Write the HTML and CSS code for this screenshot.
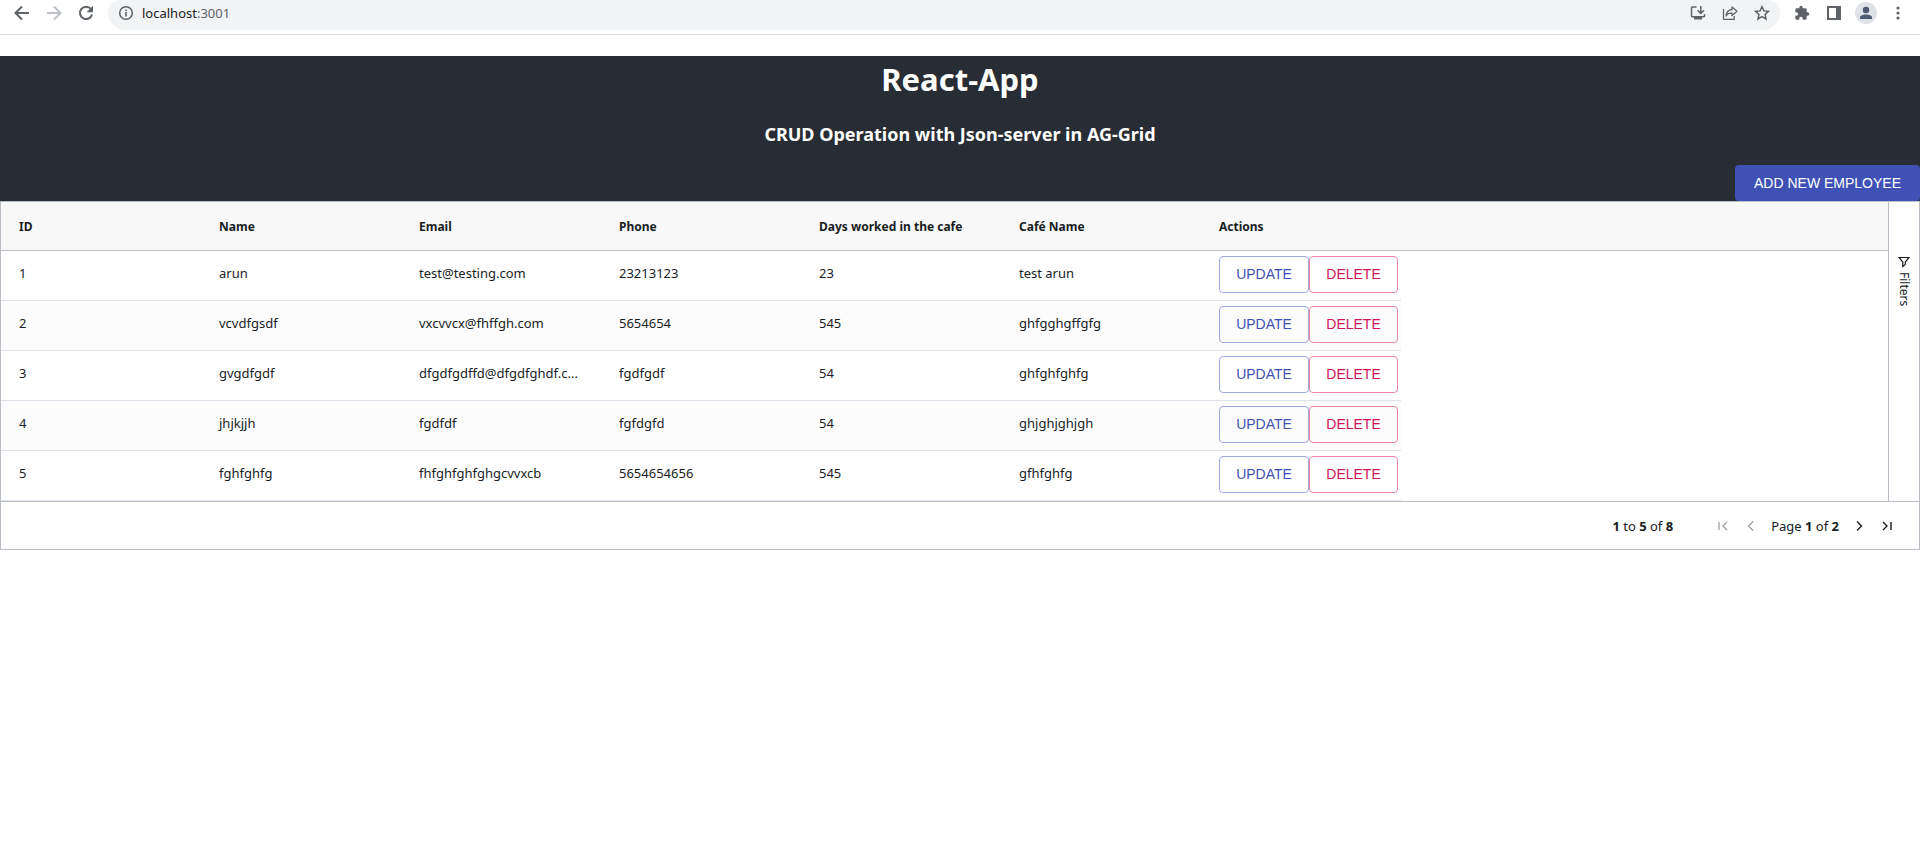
FILE: index.html
```html
<!DOCTYPE html>
<html lang="en">
<head>
<meta charset="utf-8">
<title>React-App</title>
<link rel="stylesheet" href="styles.css">
</head>
<body>
<nav class="toolbar" aria-label="Browser">
  <button class="tool" aria-label="Back"><svg viewBox="0 0 16 16"><path d="M15 8H2M8 1.500L1.500 8L8 14.500" fill="none" stroke="currentColor" stroke-width="2"/></svg></button>
  <button class="tool tool-off" aria-label="Forward" disabled><svg viewBox="0 0 16 16"><path d="M1 8h13M8 1.500L14.500 8L8 14.500" fill="none" stroke="currentColor" stroke-width="2"/></svg></button>
  <button class="tool" aria-label="Reload"><svg viewBox="0 0 16 16"><path d="M13 4A6.200 6.200 0 1 0 14.100 9.500" fill="none" stroke="currentColor" stroke-width="2"/><path d="M15 .8v6.400H8.600z" fill="currentColor"/></svg></button>
  <div class="omnibox">
    <svg class="info" viewBox="0 0 16 16"><circle cx="8" cy="8" r="6.300" fill="none" stroke="currentColor" stroke-width="1.500"/><path d="M7.200 7h1.600v4.500H7.200zM7.200 4.400h1.600V6H7.200z" fill="currentColor"/></svg>
    <div class="url"><span class="host">localhost</span>:3001</div>
    <button class="tool" aria-label="Install app"><svg viewBox="0 0 16 16"><path d="M6.500 2H2.200Q1.500 2 1.500 2.700V11q0 .7.700.7h11.600q.7 0 .7-.7V9M10.800 1v7M7.600 5.200l3.200 3.200L14 5.200" fill="none" stroke="currentColor" stroke-width="1.500"/><path d="M4 12h8v2.500H4z" fill="currentColor"/></svg></button>
    <button class="tool" aria-label="Share"><svg viewBox="0 0 16 16"><path d="M1.500 4v10.300h10.700V11M10 2l5 4.300-5 4.200V8.200C7 8 5.200 8.800 4 11c.3-3.600 2.300-6 6-6.500z" fill="none" stroke="currentColor" stroke-width="1.300" stroke-linejoin="round"/></svg></button>
    <button class="tool" aria-label="Bookmark"><svg viewBox="0 0 16 16"><path d="M8 1.700l1.900 4.200 4.600.5-3.400 3.100.9 4.500L8 11.700 4 14l.9-4.500L1.500 6.400l4.600-.5z" fill="none" stroke="currentColor" stroke-width="1.500"/></svg></button>
  </div>
  <button class="tool" aria-label="Extensions"><svg viewBox="0 0 24 24"><path d="M20.500 11H19V7a2 2 0 0 0-2-2h-4V3.500a2.500 2.500 0 0 0-5 0V5H4a2 2 0 0 0-2 2v3.800h1.500a2.700 2.700 0 0 1 0 5.400H2V20a2 2 0 0 0 2 2h3.800v-1.500a2.700 2.700 0 0 1 5.400 0V22H17a2 2 0 0 0 2-2v-4h1.500a2.500 2.500 0 0 0 0-5z" fill="currentColor"/></svg></button>
  <button class="tool" aria-label="Side panel"><svg viewBox="0 0 16 16"><path d="M1 1h14v14H1zM3 3v10h7V3z" fill="currentColor" fill-rule="evenodd"/></svg></button>
  <button class="tool avatar" aria-label="Profile"><svg viewBox="0 0 16 16"><circle cx="8" cy="5" r="3.200" fill="currentColor"/><path d="M2 14v-1.500C2 10.300 5 9.400 8 9.400s6 .9 6 3.100V14z" fill="currentColor"/></svg></button>
  <button class="tool" aria-label="Menu"><svg viewBox="0 0 16 16"><g fill="currentColor"><circle cx="8" cy="3" r="1.600"/><circle cx="8" cy="8" r="1.600"/><circle cx="8" cy="13" r="1.600"/></g></svg></button>
</nav>

<header class="app-header">
  <h1 class="title">React-App</h1>
  <h3 class="subtitle">CRUD Operation with Json-server in AG-Grid</h3>
  <div class="header-actions"><button class="btn btn-primary">ADD NEW EMPLOYEE</button></div>
</header>

<main class="grid">
  <div class="grid-main">
    <table class="table">
      <thead>
        <tr><th>ID</th><th>Name</th><th>Email</th><th>Phone</th><th>Days worked in the cafe</th><th>Café Name</th><th>Actions</th><td class="filler"></td></tr>
      </thead>
      <tbody>
        <tr><td>1</td><td>arun</td><td>test@testing.com</td><td>23213123</td><td>23</td><td>test arun</td><td class="actions"><div class="btn-pair"><button class="btn btn-update">UPDATE</button><button class="btn btn-delete">DELETE</button></div></td></tr>
        <tr><td>2</td><td>vcvdfgsdf</td><td>vxcvvcx@fhffgh.com</td><td>5654654</td><td>545</td><td>ghfgghgffgfg</td><td class="actions"><div class="btn-pair"><button class="btn btn-update">UPDATE</button><button class="btn btn-delete">DELETE</button></div></td></tr>
        <tr><td>3</td><td>gvgdfgdf</td><td>dfgdfgdffd@dfgdfghdf.c...</td><td>fgdfgdf</td><td>54</td><td>ghfghfghfg</td><td class="actions"><div class="btn-pair"><button class="btn btn-update">UPDATE</button><button class="btn btn-delete">DELETE</button></div></td></tr>
        <tr><td>4</td><td>jhjkjjh</td><td>fgdfdf</td><td>fgfdgfd</td><td>54</td><td>ghjghjghjgh</td><td class="actions"><div class="btn-pair"><button class="btn btn-update">UPDATE</button><button class="btn btn-delete">DELETE</button></div></td></tr>
        <tr><td>5</td><td>fghfghfg</td><td>fhfghfghfghgcvvxcb</td><td>5654654656</td><td>545</td><td>gfhfghfg</td><td class="actions"><div class="btn-pair"><button class="btn btn-update">UPDATE</button><button class="btn btn-delete">DELETE</button></div></td></tr>
      </tbody>
    </table>
    <aside class="sidebar">
      <button class="filters"><svg class="funnel" viewBox="0 0 12 12"><path d="M1 1.500h10L7.300 6v2.500L4.800 10.500V6z" fill="none" stroke="currentColor" stroke-width="1.200"/></svg><span>Filters</span></button>
    </aside>
  </div>
  <footer class="paging">
    <span class="summary"><b>1</b> to <b>5</b> of <b>8</b></span>
    <div class="pager">
      <button class="page-btn" aria-label="First page" disabled><svg viewBox="0 0 16 16"><path d="M4 4v8M12 4L8 8l4 4"/></svg></button>
      <button class="page-btn" aria-label="Previous page" disabled><svg viewBox="0 0 16 16"><path d="M10 3.500L5.500 8l4.500 4.500"/></svg></button>
      <span>Page <b>1</b> of <b>2</b></span>
      <button class="page-btn" aria-label="Next page"><svg viewBox="0 0 16 16"><path d="M6 3.500L10.500 8L6 12.500"/></svg></button>
      <button class="page-btn" aria-label="Last page"><svg viewBox="0 0 16 16"><path d="M4 4l4 4-4 4M12 4v8"/></svg></button>
    </div>
  </footer>
</main>
</body>
</html>
```
FILE: styles.css
```css
* { box-sizing: border-box; }

body {
  margin: 0;
  background: #fff;
  color: #181d1f;
  font: 13px/20px "Noto Sans", "Open Sans", sans-serif;
}

button {
  margin: 0;
  padding: 0;
  border: 0;
  background: none;
  color: inherit;
  font: inherit;
}

svg { display: block; }

/* Browser toolbar */
.toolbar {
  display: flex;
  align-items: flex-start;
  gap: 16px;
  height: 35px;
  padding: 0 14px;
  border-bottom: 1px solid #dadce0;
  color: #5f6368;
  overflow: hidden;
}

.tool {
  flex: none;
  width: 16px;
  height: 26px;
  display: grid;
  place-items: center;
}

.tool svg { width: 16px; height: 16px; }
.tool-off { color: #bdc1c6; }

.omnibox {
  flex: 1;
  display: flex;
  gap: 16px;
  height: 30px;
  padding: 0 10px;
  margin: 0 -2px;
  border-radius: 12px 12px 17px 17px;
  background: #f1f3f4;
}

.info { width: 16px; height: 26px; }

.url {
  flex: 1;
  margin-left: -8px;
  font-size: 13px;
  line-height: 26px;
}

.host { color: #202124; }

.avatar {
  width: 22px;
  height: 22px;
  margin: 2px -3px;
  border-radius: 50%;
  background: #dee1e6;
  color: #4c5a73;
}

/* Page header */
.app-header {
  margin-top: 21px;
  background: #282c34;
  color: #fff;
  text-align: center;
}

.title {
  margin: 0;
  font-size: 31px;
  line-height: 47px;
}

.subtitle {
  margin: 17px 0;
  font-size: 18px;
  line-height: 28px;
}

.header-actions {
  display: flex;
  justify-content: flex-end;
}

.btn {
  height: 37px;
  border-radius: 4px;
  font: 14px/24px "Liberation Sans", Arial, sans-serif;
}

.btn-primary {
  min-width: 185px;
  height: 36px;
  background: #3f51b5;
}

.btn-update,
.btn-delete {
  min-width: 90px;
  border: 1px solid #9fa8da;
  color: #3f51b5;
}

.btn-delete {
  min-width: 89px;
  border-color: #e886a8;
  color: #d0145a;
}

/* Data grid */
.grid { border: 1px solid #babfc7; }

.grid-main { display: flex; }

.table {
  flex: 1;
  min-width: 0;
  table-layout: fixed;
  border-collapse: separate;
  border-spacing: 0;
}

th, td {
  height: 50px;
  padding: 0 18px;
  overflow: hidden;
  text-align: left;
  white-space: nowrap;
}

th { width: 200px; }

thead th,
.filler {
  height: 49px;
  padding-top: 2px;
  border-bottom: 1px solid #babfc7;
  background: #f8f8f8;
  font-size: 12px;
}

tbody td {
  padding-bottom: 5px;
  border-bottom: 1px solid #dde2eb;
}
tbody tr:nth-child(even) td { background: #fcfcfc; }

tbody .actions {
  padding-right: 0;
  padding-bottom: 3px;
}

.btn-pair { display: flex; }

.sidebar {
  width: 31px;
  padding-top: 48px;
  border-left: 1px solid #babfc7;
}

.filters {
  display: flex;
  align-items: center;
  gap: 4px;
  padding: 6px 5px;
  font-size: 12px;
  writing-mode: vertical-rl;
}

.funnel { width: 12px; height: 12px; }

.paging {
  display: flex;
  align-items: center;
  justify-content: flex-end;
  gap: 42px;
  height: 48px;
  padding: 0 24px;
  border-top: 1px solid #babfc7;
}

.summary,
.pager {
  font-size: 13px;
}

.pager {
  display: flex;
  align-items: center;
  gap: 12px;
}

.page-btn svg {
  width: 16px;
  height: 16px;
  fill: none;
  stroke: currentColor;
  stroke-width: 1.4;
}

.page-btn:disabled { color: #a3a5a6; }
```
